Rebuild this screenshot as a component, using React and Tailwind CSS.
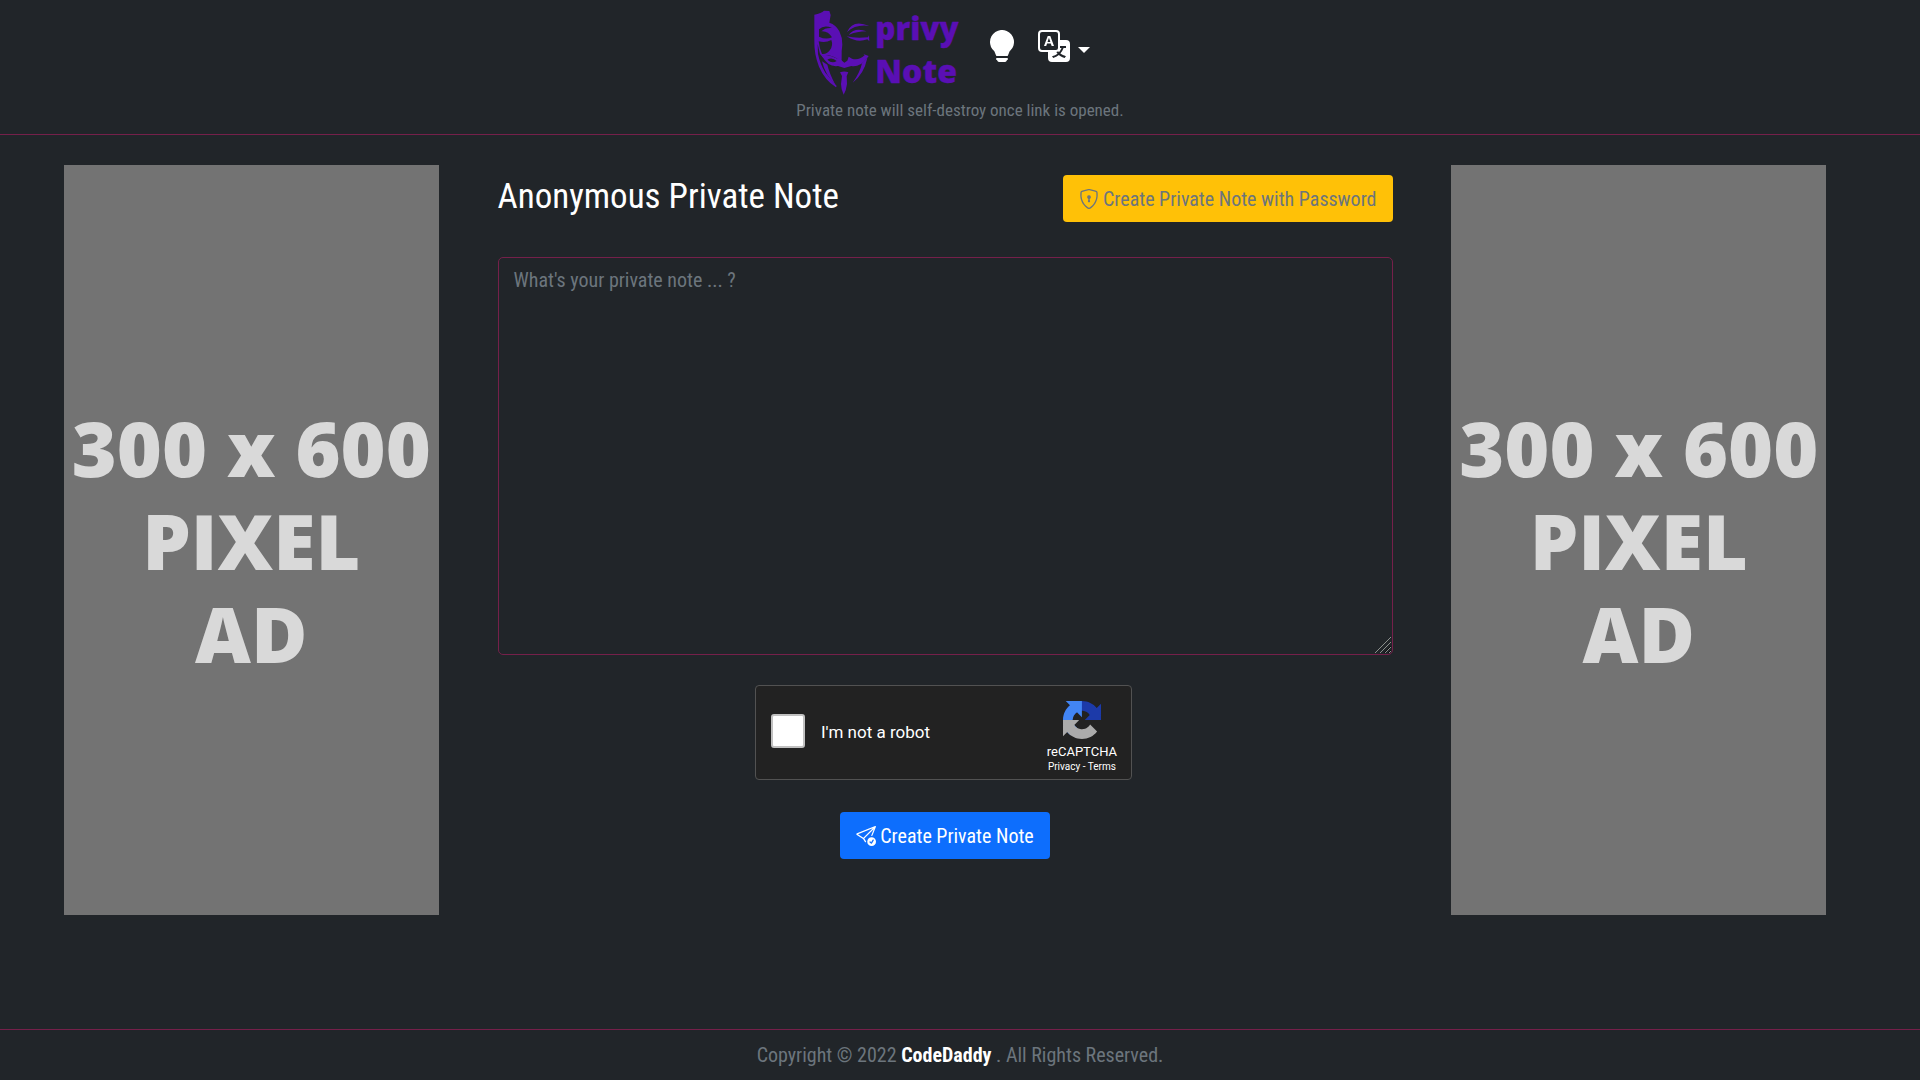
import React, { useState } from 'react';
import { BsLightbulbFill, BsTranslate, BsShieldLock, BsSendCheck } from 'react-icons/bs';

export default function App() {
  const [note, setNote] = useState('');

  return (
    <div className="min-h-screen flex flex-col bg-[#212529] text-white text-xl font-['Roboto_Condensed','Roboto',sans-serif]">
      {/* Header */}
      <header className="flex flex-col items-center border-b border-[#75204a] pt-1 pb-[14px]">
        <div className="flex items-start pr-5">
          <a href="/" aria-label="privy Note">
            <Logo />
          </a>
          <button type="button" aria-label="Toggle theme" className="mt-[26px] ml-4">
            <BsLightbulbFill className="w-8 h-8" />
          </button>
          <button type="button" aria-label="Language" className="mt-[26px] ml-5 flex items-center gap-2">
            <BsTranslate className="w-8 h-8" />
            <span className="mt-2 border-x-6 border-x-transparent border-t-6 border-t-white" />
          </button>
        </div>
        <p className="text-[17px] leading-5 text-[#6c757d]">Private note will self-destroy once link is opened.</p>
      </header>

      {/* Main Content */}
      <main className="grow grid grid-cols-4 items-start pt-[30px] pl-5 pr-[50px]">
        <AdBanner />

        <section className="col-span-2 px-[15px] pt-[10px] flex flex-col items-center">
          <div className="w-full flex items-start justify-between">
            <h1 className="text-[35px] leading-[44px]">Anonymous Private Note</h1>
            <button type="button" className="flex items-center gap-1 h-[47px] px-4 rounded-[4px] bg-[#ffc107] text-[#6c757d]">
              <BsShieldLock className="w-5 h-5" />
              Create Private Note with Password
            </button>
          </div>

          <div className="relative w-full mt-[35px]">
            <textarea
              aria-label="Private note"
              placeholder="What's your private note ... ?"
              value={note}
              onChange={(e) => setNote(e.target.value)}
              className="block w-full h-[398px] px-[15px] py-[7px] leading-[30px] rounded-[5px] border border-[#75204a] bg-transparent placeholder:text-[#6c757d]"
            />
            <svg viewBox="0 0 18 18" className="absolute right-px bottom-px w-[18px] h-[18px] pointer-events-none" stroke="#8b8f8c" fill="none">
              <path d="M1 17L17 1M6 17L17 6M11 17L17 11M15 17l2-2" />
            </svg>
          </div>

          <Recaptcha />

          <button type="submit" className="flex items-center gap-1 h-[47px] mt-8 px-4 rounded-[4px] bg-[#0d6efd]">
            <BsSendCheck className="w-5 h-5" />
            Create Private Note
          </button>
        </section>

        <AdBanner />
      </main>

      {/* Footer */}
      <footer className="border-t border-[#75204a] pt-[10px] pb-[10px] text-center leading-[30px] text-[#6c757d]">
        Copyright © 2022 <a href="/" className="font-bold text-white">CodeDaddy</a> . All Rights Reserved.
      </footer>
    </div>
  );
}

function AdBanner() {
  return (
    <aside className="w-[375px] h-[750px] mx-auto flex items-center justify-center bg-[#737373] text-[#d9d9d9] text-center font-extrabold text-[77px] leading-[93px] font-['Open_Sans',sans-serif]">
      <p>300 x 600<br />PIXEL<br />AD</p>
    </aside>
  );
}

function Recaptcha() {
  return (
    <div className="w-[377px] h-[95px] mt-[30px] mr-[3px] pl-[15px] pr-[14px] flex items-center justify-between rounded-[4px] border border-[#525252] bg-[#222222] font-['Roboto',sans-serif]">
      <label className="flex items-center gap-4 text-[17px]">
        <input type="checkbox" className="appearance-none w-[34px] h-[34px] mb-1 rounded-[3px] border-2 border-[#c1c1c1] bg-white" />
        I'm not a robot
      </label>
      <div className="flex flex-col items-center pt-2">
        <svg viewBox="0 0 64 64" className="w-[38px] h-[38px] mb-1">
          <path d="M64 31.955l-.033-1.37V4.687l-7.16 7.16C50.948 4.674 42.033.093 32.05.093c-10.4 0-19.622 4.96-25.458 12.64l11.736 11.86a15.55 15.55 0 0 1 4.754-5.334c2.05-1.6 4.952-2.906 8.968-2.906.485 0 .86.057 1.135.163 4.976.393 9.288 3.14 11.828 7.124l-8.307 8.307L64 31.953" fill="#1c3aa9" />
          <path d="M31.862.094l-1.37.033H4.594l7.16 7.16C4.58 13.147 0 22.06 0 32.046c0 10.4 4.96 19.622 12.64 25.458L24.5 45.768a15.55 15.55 0 0 1-5.334-4.754c-1.6-2.05-2.906-4.952-2.906-8.968 0-.485.057-.86.163-1.135.393-4.976 3.14-9.288 7.124-11.828l8.307 8.307L31.86.095" fill="#4285f4" />
          <path d="M.001 32.045l.033 1.37v25.898l7.16-7.16c5.86 7.173 14.774 11.754 24.76 11.754 10.4 0 19.622-4.96 25.458-12.64l-11.736-11.86a15.55 15.55 0 0 1-4.754 5.334c-2.05 1.6-4.952 2.906-8.968 2.906-.485 0-.86-.057-1.135-.163-4.976-.393-9.288-3.14-11.828-7.124l8.307-8.307c-10.522.04-22.4.066-27.295-.005" fill="#ababab" />
        </svg>
        <span className="text-[13px] leading-[18px]">reCAPTCHA</span>
        <span className="text-[10px] leading-3">
          <a href="https://www.google.com/intl/en/policies/privacy/">Privacy</a>
          {' - '}
          <a href="https://www.google.com/intl/en/policies/terms/">Terms</a>
        </span>
      </div>
    </div>
  );
}

// Mask mark with the two-line word mark next to it
function Logo() {
  return (
    <svg viewBox="0 0 480 288" className="w-40 h-24" fill="#5a0fb4">
      <path d="M13 32 Q34 28 42 20 L58 21 L62 33 L58 56 Q78 62 88 82 Q98 102 97 122 Q94 140 95 164 L84 166 Q62 150 46 156 L40 162 L30 150 L23 120 L24 150 Q30 180 46 206 L80 246 L78 250 Q44 228 27 188 Q12 150 13 110 Z" />
      <path d="M27 76 Q42 62 66 72 Q46 70 34 82 Q54 80 66 100 Q48 108 27 98 Z" fill="#212529" />
      <path d="M26 112 Q46 118 64 108 Q70 124 60 138 Q50 152 36 150 Q28 132 26 112 Z" fill="#212529" />
      <path d="M36 156 Q58 150 82 164 L92 158 L96 170 L103 176 L112 170 L116 158 L126 164 Q146 170 164 154 L160 150 L176 156 L170 164 Q150 190 124 186 L103 192 L84 186 Q54 190 36 156 Z" />
      <path d="M52 167 Q66 158 80 171 Q66 180 52 167 Z" fill="#212529" />
      <path d="M90 205 Q103 200 115 205 L110 216 L111 240 Q109 258 101 272 Q93 256 93 240 L96 216 Z" />
      <path d="M111 84 Q128 44 178 66 Q138 60 111 84 Z" />
      <path d="M116 93 Q134 68 170 82 Q140 82 116 93 Z" />
      <path d="M110 97 Q136 104 174 100 L177 94 L178 112 L172 106 Q142 118 110 97 Z" />
      <path d="M172 162 Q162 210 128 236 Q150 206 156 178 Z" />
      <path d="M36 172 Q46 214 76 242 Q58 208 52 182 Z" />
      <g stroke="#5a0fb4" strokeWidth="1" strokeLinejoin="round">
        <text x="196" y="108" fontSize="94" fontWeight="800" fontFamily="Open Sans, sans-serif">privy</text>
        <text x="196" y="238" fontSize="96" fontWeight="800" fontFamily="Open Sans, sans-serif">Note</text>
      </g>
    </svg>
  );
}
